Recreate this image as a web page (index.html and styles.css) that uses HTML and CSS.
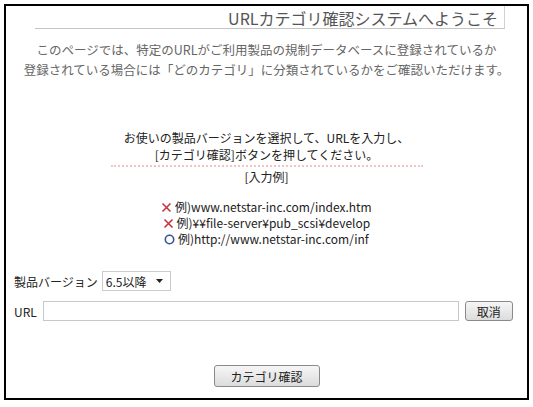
FILE: index.html
```html
<!DOCTYPE html>
<html lang="ja">
<head>
    <meta charset="UTF-8">
    <title>URLカテゴリ確認システム</title>
    <link rel="stylesheet" href="styles.css">
</head>
<body>
    <div class="frame">
        <div class="title-row">
            <h1 class="title">URLカテゴリ確認システムへようこそ</h1>
        </div>

        <p class="intro">
            このページでは、特定のURLがご利用製品の規制データベースに登録されているか<br>
            登録されている場合には「どのカテゴリ」に分類されているかをご確認いただけます。
        </p>

        <div class="guide">
            <p>お使いの製品バージョンを選択して、URLを入力し、<br>[カテゴリ確認]ボタンを押してください。</p>
            <div class="dots"></div>
            <p>[入力例]</p>
        </div>

        <ul class="examples">
            <li><svg class="mark" width="11" height="11" viewBox="0 0 11 11"><path d="M1.5 1.5l8 8M9.5 1.5l-8 8" stroke="#c8323c" stroke-width="1.6"/></svg> 例)www.netstar-inc.com/index.htm</li>
            <li><svg class="mark" width="11" height="11" viewBox="0 0 11 11"><path d="M1.5 1.5l8 8M9.5 1.5l-8 8" stroke="#c8323c" stroke-width="1.6"/></svg> 例)¥¥file-server¥pub_scsi¥develop</li>
            <li><svg class="mark" width="11" height="11" viewBox="0 0 11 11"><circle cx="5.5" cy="5.5" r="4.2" fill="none" stroke="#3a4fa0" stroke-width="1.6"/></svg> 例)http://www.netstar-inc.com/inf</li>
        </ul>

        <form class="check-form">
            <div class="row">
                <label for="version">製品バージョン</label>
                <span class="select-wrap">
                    <select id="version">
                        <option>6.5以降</option>
                        <option>6.0以前</option>
                    </select>
                    <svg class="arrow" width="7" height="4" viewBox="0 0 7 4"><path d="M0 0h7L3.5 4z" fill="#222"/></svg>
                </span>
            </div>
            <div class="row">
                <label for="url">URL</label>
                <input type="text" id="url" class="url-input">
                <button type="reset" class="btn btn-small">取消</button>
            </div>
            <div class="submit-row">
                <button type="button" class="btn btn-wide">カテゴリ確認</button>
            </div>
        </form>
    </div>
</body>
</html>
```

FILE: styles.css
```css
body {
    margin: 0;
    padding: 4px;
    background-color: #fff;
    font-family: "Noto Sans CJK JP", "DejaVu Sans", sans-serif;
    font-size: 12px;
    color: #222;
}
.frame {
    height: 392px;
    border: 2px solid #000;
    padding: 0 8px;
    box-sizing: content-box;
    width: 505px;
}
.title-row {
    margin-left: 21px;
    margin-right: 14px;
    border-bottom: 1px solid #c4c4c4;
    border-right: 1px solid #d0d0d0;
    padding-right: 6px;
    text-align: right;
    height: 22px;
}
.title {
    margin: 0;
    font-size: 16px;
    font-weight: normal;
    color: #555;
    line-height: 24px;
}
.intro {
    margin: 11px 0 0;
    text-align: center;
    font-size: 12.5px;
    line-height: 20px;
    color: #666;
}
.guide {
    margin-top: 49px;
    text-align: center;
    line-height: 17px;
}
.guide p {
    margin: 0;
}
.dots {
    width: 312px;
    margin: 2px auto 1px;
    border-top: 2px dotted #f2c4c4;
}
.examples {
    list-style: none;
    margin: 14px 0 0;
    padding: 0;
    text-align: center;
    line-height: 16px;
}
.mark {
    vertical-align: -1px;
}
.check-form {
    margin-top: 24px;
}
.row {
    display: flex;
    align-items: center;
    gap: 4px;
    height: 20px;
    margin-bottom: 10px;
}
.select-wrap {
    position: relative;
    display: inline-block;
}
.select-wrap select {
    appearance: none;
    -webkit-appearance: none;
    width: 69px;
    height: 20px;
    border: 1px solid #ccc;
    background: #fff;
    font-family: inherit;
    font-size: 12px;
    padding: 0 0 0 3px;
    color: #222;
}
.arrow {
    position: absolute;
    right: 8px;
    top: 8px;
    pointer-events: none;
}
.url-input {
    width: 416px;
    height: 20px;
    box-sizing: border-box;
    border: 1px solid #c8c8c8;
    margin-left: 2px;
}
.btn {
    font-family: inherit;
    font-size: 12px;
    color: #222;
    border: 1px solid #8a8a8a;
    border-radius: 3px;
    background: linear-gradient(#f6f6f6, #dcdcdc);
    padding: 0;
    height: 20px;
}
.btn-small {
    width: 48px;
    margin-left: 2px;
}
.submit-row {
    text-align: center;
    margin-top: 44px;
}
.btn-wide {
    width: 106px;
    height: 22px;
}
```
